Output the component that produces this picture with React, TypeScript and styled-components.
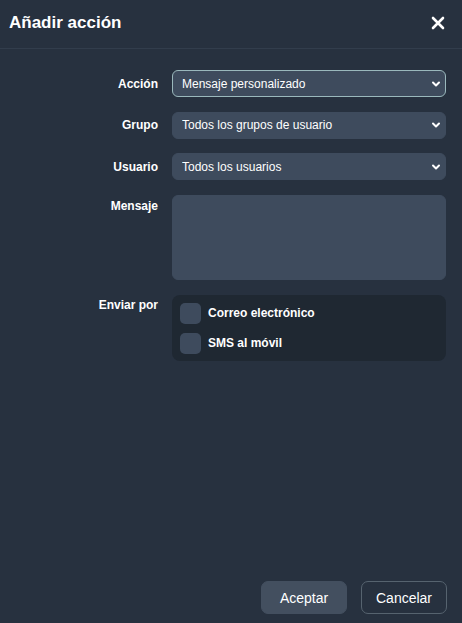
import React from "react";
import styled, { createGlobalStyle } from "styled-components";

const Global = createGlobalStyle`
  html, body { margin: 0; padding: 0; height: 100%; background: #27313f; }
  #root { height: 100%; }
  * { box-sizing: border-box; }
`;

const Dialog = styled.div`
  height: 100vh;
  display: flex;
  flex-direction: column;
  background: #27313f;
  color: #ffffff;
  font-family: "Liberation Sans", Arial, sans-serif;
`;

const Header = styled.div`
  height: 49px;
  display: flex;
  align-items: center;
  justify-content: space-between;
  padding: 0 16px 2px 9px;
  border-bottom: 1px solid #323d4c;
`;

const Title = styled.h1`
  margin: 0;
  font-size: 17px;
  font-weight: 700;
  color: #ffffff;
`;

const CloseButton = styled.button`
  border: none;
  background: none;
  padding: 0;
  width: 16px;
  height: 16px;
  display: flex;
  align-items: center;
  justify-content: center;
  cursor: pointer;
`;

const Body = styled.div`
  flex: 1;
  display: grid;
  grid-template-columns: 150px 1fr;
  column-gap: 14px;
  row-gap: 14.5px;
  align-content: start;
  padding: 21px 16px 0 8px;
`;

const Label = styled.label<{ $top?: boolean }>`
  font-size: 12px;
  font-weight: 700;
  color: #ffffff;
  text-align: right;
  align-self: ${(p) => (p.$top ? "start" : "center")};
  padding-top: ${(p) => (p.$top ? "4px" : "0")};
`;

const SelectWrap = styled.div`
  position: relative;
`;

const Select = styled.select<{ $focused?: boolean }>`
  appearance: none;
  -webkit-appearance: none;
  width: 100%;
  height: 27px;
  display: block;
  padding: 0 24px 0 9px;
  border-radius: 6px;
  border: 1px solid ${(p) => (p.$focused ? "#9ab8bc" : "#3e4b5d")};
  background: #3e4b5d;
  color: #ffffff;
  font-family: "Liberation Sans", Arial, sans-serif;
  font-size: 12px;
  outline: none;
`;

const Chevron = styled.svg`
  position: absolute;
  right: 5px;
  top: 50%;
  transform: translateY(-50%);
  pointer-events: none;
`;

const TextArea = styled.textarea`
  width: 100%;
  height: 85px;
  border-radius: 6px;
  border: 1px solid #3e4b5d;
  background: #3e4b5d;
  color: #ffffff;
  resize: none;
  outline: none;
  font-family: "Liberation Sans", Arial, sans-serif;
  font-size: 12px;
  padding: 6px 9px;
  display: block;
`;

const Group = styled.div`
  background: #1f2832;
  border-radius: 8px;
  padding: 8px 8px 7px 8px;
  display: flex;
  flex-direction: column;
  gap: 9px;
  margin-top: 1px;
`;

const CheckRow = styled.label`
  display: flex;
  align-items: center;
  gap: 7px;
  font-size: 12px;
  font-weight: 700;
  color: #ffffff;
  line-height: 14px;
  padding-bottom: 1px;
`;

const Box = styled.span`
  width: 21px;
  height: 21px;
  border-radius: 5px;
  background: #3e4b5d;
  display: inline-block;
  flex: none;
  margin-bottom: -1px;
`;

const Footer = styled.div`
  display: flex;
  justify-content: flex-end;
  gap: 14px;
  padding: 0 15px 9px 0;
`;

const Button = styled.button<{ $primary?: boolean }>`
  width: 86px;
  height: 33px;
  border-radius: 7px;
  font-family: "Liberation Sans", Arial, sans-serif;
  font-size: 14px;
  font-weight: 400;
  color: #ffffff;
  cursor: pointer;
  background: ${(p) => (p.$primary ? "#434f5f" : "transparent")};
  border: 1px solid ${(p) => (p.$primary ? "#434f5f" : "#56636f")};
`;

const ChevronIcon = () => (
  <Chevron width="10" height="10" viewBox="0 0 10 10">
    <path d="M2 3.5 L5 6.5 L8 3.5" fill="none" stroke="#ffffff" strokeWidth="2" strokeLinecap="round" strokeLinejoin="round" />
  </Chevron>
);

const Field = ({ value, focused }: { value: string; focused?: boolean }) => (
  <SelectWrap>
    <Select $focused={focused} defaultValue={value}>
      <option>{value}</option>
    </Select>
    <ChevronIcon />
  </SelectWrap>
);

export default function App() {
  return (
    <>
      <Global />
      <Dialog>
        <Header>
          <Title>Añadir acción</Title>
          <CloseButton aria-label="Cerrar">
            <svg width="14" height="14" viewBox="0 0 14 14">
              <path d="M2 2 L12 12 M12 2 L2 12" stroke="#ffffff" strokeWidth="2.6" strokeLinecap="round" />
            </svg>
          </CloseButton>
        </Header>
        <Body>
          <Label>Acción</Label>
          <Field value="Mensaje personalizado" focused />
          <Label>Grupo</Label>
          <Field value="Todos los grupos de usuario" />
          <Label>Usuario</Label>
          <Field value="Todos los usuarios" />
          <Label $top>Mensaje</Label>
          <TextArea />
          <Label $top>Enviar por</Label>
          <Group>
            <CheckRow>
              <Box />
              Correo electrónico
            </CheckRow>
            <CheckRow>
              <Box />
              SMS al móvil
            </CheckRow>
          </Group>
        </Body>
        <Footer>
          <Button $primary>Aceptar</Button>
          <Button>Cancelar</Button>
        </Footer>
      </Dialog>
    </>
  );
}
